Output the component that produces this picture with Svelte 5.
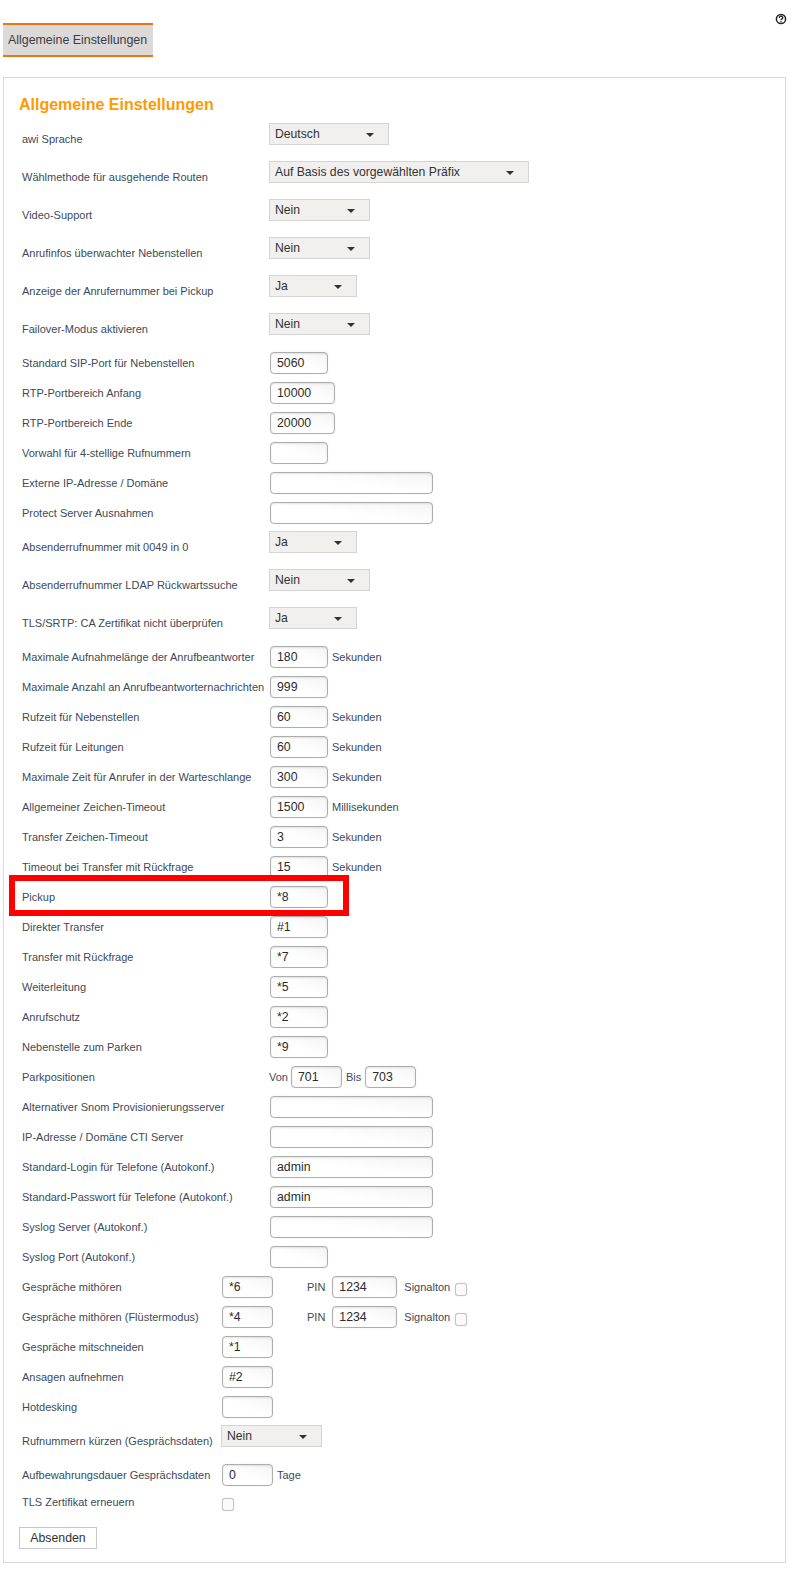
<script>
  const topRows = [
    { label: "awi Sprache", select: "Deutsch", w: 120 },
    { label: "Wählmethode für ausgehende Routen", select: "Auf Basis des vorgewählten Präfix", w: 260 },
    { label: "Video-Support", select: "Nein", w: 101 },
    { label: "Anrufinfos überwachter Nebenstellen", select: "Nein", w: 101 },
    { label: "Anzeige der Anrufernummer bei Pickup", select: "Ja", w: 88 },
    { label: "Failover-Modus aktivieren", select: "Nein", w: 101 },
    { label: "Standard SIP-Port für Nebenstellen", value: "5060", w: 58 },
    { label: "RTP-Portbereich Anfang", value: "10000", w: 65 },
    { label: "RTP-Portbereich Ende", value: "20000", w: 65 },
    { label: "Vorwahl für 4-stellige Rufnummern", value: "", w: 58 },
    { label: "Externe IP-Adresse / Domäne", value: "", w: 163 },
    { label: "Protect Server Ausnahmen", value: "", w: 163 },
    { label: "Absenderrufnummer mit 0049 in 0", select: "Ja", w: 88 },
    { label: "Absenderrufnummer LDAP Rückwartssuche", select: "Nein", w: 101 },
    { label: "TLS/SRTP: CA Zertifikat nicht überprüfen", select: "Ja", w: 88 },
    { label: "Maximale Aufnahmelänge der Anrufbeantworter", value: "180", w: 58, unit: "Sekunden" },
    { label: "Maximale Anzahl an Anrufbeantworternachrichten", value: "999", w: 58 },
    { label: "Rufzeit für Nebenstellen", value: "60", w: 58, unit: "Sekunden" },
    { label: "Rufzeit für Leitungen", value: "60", w: 58, unit: "Sekunden" },
    { label: "Maximale Zeit für Anrufer in der Warteschlange", value: "300", w: 58, unit: "Sekunden" },
    { label: "Allgemeiner Zeichen-Timeout", value: "1500", w: 58, unit: "Millisekunden" },
    { label: "Transfer Zeichen-Timeout", value: "3", w: 58, unit: "Sekunden" },
    { label: "Timeout bei Transfer mit Rückfrage", value: "15", w: 58, unit: "Sekunden" },
    { label: "Pickup", value: "*8", w: 58, marked: true },
    { label: "Direkter Transfer", value: "#1", w: 58 },
    { label: "Transfer mit Rückfrage", value: "*7", w: 58 },
    { label: "Weiterleitung", value: "*5", w: 58 },
    { label: "Anrufschutz", value: "*2", w: 58 },
    { label: "Nebenstelle zum Parken", value: "*9", w: 58 }
  ]

  const autoRows = [
    { label: "Alternativer Snom Provisionierungsserver", value: "", w: 163 },
    { label: "IP-Adresse / Domäne CTI Server", value: "", w: 163 },
    { label: "Standard-Login für Telefone (Autokonf.)", value: "admin", w: 163 },
    { label: "Standard-Passwort für Telefone (Autokonf.)", value: "admin", w: 163 },
    { label: "Syslog Server (Autokonf.)", value: "", w: 163 },
    { label: "Syslog Port (Autokonf.)", value: "", w: 58 }
  ]

  const recRows = [
    { label: "Gespräche mithören", value: "*6", pin: "1234" },
    { label: "Gespräche mithören (Flüstermodus)", value: "*4", pin: "1234" },
    { label: "Gespräche mitschneiden", value: "*1" },
    { label: "Ansagen aufnehmen", value: "#2" },
    { label: "Hotdesking", value: "" }
  ]
</script>

{#snippet fakeSelect(text, w)}
  <div class="select" style="width: {w}px">
    <span>{text}</span>
    <i class="caret"></i>
  </div>
{/snippet}

{#snippet inputRow(row)}
  <div class="row" class:tall={row.select}>
    <label class="label">{row.label}</label>
    {#if row.select}
      {@render fakeSelect(row.select, row.w)}
    {:else}
      <input class="field" type="text" value={row.value} style="width: {row.w}px" />
    {/if}
    {#if row.unit}<span class="unit">{row.unit}</span>{/if}
    {#if row.marked}<div class="marker"></div>{/if}
  </div>
{/snippet}

<div class="page">
  <div class="topbar">
    <div class="tab">Allgemeine Einstellungen</div>
    <svg class="help" viewBox="0 0 12 12" width="12" height="12" aria-hidden="true">
      <circle cx="6" cy="6" r="4.6" fill="none" stroke="#222" stroke-width="1.5" />
      <path d="M4.3 4.9c0-2.2 3.5-2.2 3.5-.2 0 1.2-1.8 1.2-1.8 2.6" fill="none" stroke="#222" stroke-width="1.3" />
      <rect x="5.4" y="8" width="1.2" height="1.2" fill="#222" />
    </svg>
  </div>

  <form class="panel" onsubmit={(e) => e.preventDefault()}>
    <h2>Allgemeine Einstellungen</h2>

    {#each topRows as row}
      {@render inputRow(row)}
    {/each}

    <div class="row">
      <label class="label park-label">Parkpositionen</label>
      <span class="park-text von">Von</span>
      <input class="field" type="text" value="701" style="width: 51px" />
      <span class="park-text bis">Bis</span>
      <input class="field" type="text" value="703" style="width: 51px" />
    </div>

    {#each autoRows as row}
      {@render inputRow(row)}
    {/each}

    {#each recRows as row}
      <div class="row">
        <label class="label narrow">{row.label}</label>
        <input class="field" type="text" value={row.value} style="width: 51px" />
        {#if row.pin}
          <span class="pin">PIN</span>
          <input class="field" type="text" value={row.pin} style="width: 65px" />
          <span class="signal">Signalton</span>
          <span class="check"></span>
        {/if}
      </div>
    {/each}

    <div class="row tall">
      <label class="label narrow">Rufnummern kürzen (Gesprächsdaten)</label>
      {@render fakeSelect("Nein", 101)}
    </div>

    <div class="row">
      <label class="label narrow">Aufbewahrungsdauer Gesprächsdaten</label>
      <input class="field" type="text" value="0" style="width: 51px" />
      <span class="unit">Tage</span>
    </div>

    <div class="row tls">
      <label class="label narrow">TLS Zertifikat erneuern</label>
      <span class="check"></span>
    </div>

    <button class="submit" type="submit">Absenden</button>
  </form>
</div>

<style>
  :global(body) {
    background: #fff;
  }

  .page {
    width: 799px;
    height: 1570px;
    box-sizing: border-box;
    padding: 23px 12px 0 3px;
    font-family: "Liberation Sans", Arial, sans-serif;
    color: #333;
  }

  .topbar {
    display: flex;
    justify-content: space-between;
    align-items: flex-start;
    height: 54px;
  }

  .tab {
    box-sizing: border-box;
    width: 150px;
    height: 34px;
    line-height: 30px;
    padding-left: 5px;
    background: #dcdad8;
    border-top: 2px solid #ee7411;
    border-bottom: 2px solid #ee7411;
    font-size: 12.4px;
    color: #3c3c44;
    white-space: nowrap;
  }

  .help {
    margin-top: -10px;
  }

  .panel {
    box-sizing: border-box;
    width: 783px;
    height: 1486px;
    border: 1px solid #d9d9d9;
    padding: 17px 0 0 15px;
  }

  h2 {
    margin: 0;
    height: 28px;
    line-height: 20px;
    font-size: 16px;
    font-weight: bold;
    color: #ff9900;
    white-space: nowrap;
  }

  .row {
    position: relative;
    display: flex;
    align-items: flex-start;
    height: 30px;
    padding-left: 3px;
  }

  .row.tall {
    height: 38px;
  }

  .row.tls {
    height: 34px;
  }

  .label {
    flex: none;
    width: 248px;
    padding-top: 6px;
    line-height: 13px;
    font-size: 11px;
    color: #3d4a58;
    white-space: nowrap;
  }

  .row.tall .label {
    padding-top: 10px;
  }

  .row.tls .label {
    padding-top: 3px;
  }

  .label.narrow {
    width: 200px;
  }

  .label.park-label {
    width: 247px;
  }

  .select {
    flex: none;
    box-sizing: border-box;
    display: flex;
    justify-content: space-between;
    align-items: center;
    height: 22px;
    margin-left: -1px;
    padding: 0 14px 0 5px;
    background: #f1f0ee;
    border: 1px solid #d4d4d4;
    font-size: 12.2px;
    color: #333;
  }

  .caret {
    width: 0;
    height: 0;
    margin-top: 1px;
    border: 4px solid transparent;
    border-top-color: #333;
    border-bottom: 0;
  }

  .field {
    flex: none;
    box-sizing: border-box;
    height: 22px;
    margin: 1px 0 0;
    padding: 0 6px;
    background: linear-gradient(to bottom left, #f4f4f4, #fff 55%);
    border: 1px solid #adadad;
    border-radius: 4px;
    box-shadow: inset 0 1px 2px rgba(0, 0, 0, 0.1), 0 0 1px rgba(0, 0, 0, 0.15);
    font-family: inherit;
    font-size: 12.3px;
    color: #2b2b2b;
    outline: none;
  }

  .unit {
    margin-left: 4px;
    padding-top: 6px;
    line-height: 13px;
    font-size: 11px;
    color: #3d4a58;
  }

  .park-text {
    padding-top: 6px;
    line-height: 13px;
    font-size: 11px;
    color: #3d4a58;
  }

  .von {
    margin-right: 3px;
  }

  .bis {
    margin-left: 4px;
    margin-right: 4px;
  }

  .pin {
    margin-left: 34px;
    margin-right: 7px;
    padding-top: 6px;
    line-height: 13px;
    font-size: 11px;
    color: #3d4a58;
  }

  .signal {
    margin-left: 7px;
    margin-right: 5px;
    padding-top: 6px;
    line-height: 13px;
    font-size: 11px;
    color: #3d4a58;
  }

  .check {
    flex: none;
    box-sizing: border-box;
    width: 12px;
    height: 13px;
    margin-top: 8px;
    background: #fafafa;
    border: 1px solid #c4c4c4;
    border-radius: 3px;
    box-shadow: 0 0 1px rgba(0, 0, 0, 0.25);
  }

  .row.tls .check {
    margin-top: 5px;
  }

  .marker {
    position: absolute;
    left: -10px;
    top: -10px;
    width: 340px;
    height: 41px;
    box-sizing: border-box;
    border: 6px solid #ff0000;
    pointer-events: none;
  }

  .submit {
    display: block;
    box-sizing: border-box;
    width: 78px;
    height: 22px;
    padding: 0;
    background: #fff;
    border: 1px solid #c8c8c8;
    font-family: inherit;
    font-size: 12.3px;
    color: #333;
  }
</style>
